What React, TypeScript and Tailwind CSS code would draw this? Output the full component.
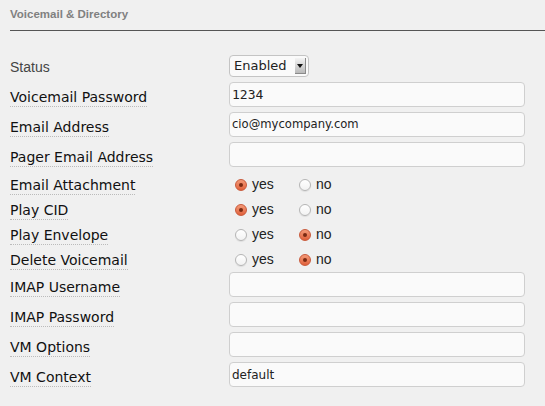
import React from 'react';

const labelFont = { fontFamily: '"DejaVu Sans", sans-serif' };

const Label: React.FC<{ text: string; shift?: boolean }> = ({ text, shift }) => (
    <div className={`w-[219px] shrink-0 ${shift ? 'translate-y-[1px]' : '-translate-y-[1px]'}`}>
        <span className="text-[14px] text-[#111] border-b border-dotted border-[#bbb] pb-[1px]" style={labelFont}>{text}</span>
    </div>
);

const TextRow: React.FC<{ label: string; value?: string; mono?: boolean; size?: string }> = ({ label, value = '', mono, size = 'text-[13px]' }) => (
    <div className="flex items-center h-[25px] mb-[5px]">
        <Label text={label} shift />
        <div
            className={`w-[296px] h-[25px] rounded-[4px] border border-[#cfcfcf] bg-[#fafafa] flex items-center px-[2px] text-[#222] ${size}`}
            style={{ fontFamily: mono ? '"DejaVu Sans Mono", monospace' : '"DejaVu Sans", sans-serif' }}
        >
            {value}
        </div>
    </div>
);

const Radio: React.FC<{ checked: boolean }> = ({ checked }) =>
    checked ? (
        <span className="w-[12px] h-[12px] rounded-full bg-gradient-to-b from-[#f39a78] to-[#e0603a] border border-[#c9593a] flex items-center justify-center">
            <span className="w-[4px] h-[4px] rounded-full bg-[#7a2a12]" />
        </span>
    ) : (
        <span className="w-[12px] h-[12px] rounded-full bg-gradient-to-b from-[#ffffff] to-[#f2f2f2] border border-[#b5b5b5] shadow-[0_1px_1px_rgba(0,0,0,0.08)]" />
    );

const RadioRow: React.FC<{ label: string; yes: boolean }> = ({ label, yes }) => (
    <div className="flex items-center h-[25px]">
        <Label text={label} />
        <div className="flex items-center text-[14px] text-[#222]" style={{ fontFamily: '"Liberation Sans", Arial, sans-serif' }}>
            <div className="flex items-center w-[70px] pl-[6px] gap-[5px]">
                <Radio checked={yes} />
                <span>yes</span>
            </div>
            <div className="flex items-center gap-[5px]">
                <Radio checked={!yes} />
                <span>no</span>
            </div>
        </div>
    </div>
);

export default function App() {
    return (
        <div className="w-[545px] h-[406px] bg-[#f0f0f0] pl-[10px] overflow-hidden">
            <div className="h-[31px] flex items-center border-b border-[#555]">
                <span className="text-[11.5px] font-bold text-[#808080] -mt-[1px]" style={{ fontFamily: '"Liberation Sans", Arial, sans-serif' }}>
                    Voicemail &amp; Directory
                </span>
            </div>

            <div className="pt-[24px]">
                <div className="flex items-center h-[22px] mb-[5px]">
                    <div className="w-[219px] shrink-0 text-[14px] text-[#444] translate-y-[1px]" style={{ fontFamily: '"Liberation Sans", Arial, sans-serif' }}>Status</div>
                    <div className="w-[80px] h-[22px] rounded-[4px] border border-[#c4c4c4] bg-[#fafafa] flex items-center justify-between pl-[4px] pr-[2px]">
                        <span className="text-[13px] text-[#222]" style={labelFont}>Enabled</span>
                        <span className="w-[11px] h-[16px] bg-gradient-to-b from-[#f4f4f4] to-[#b9b9b9] border-r border-b border-[#8a8a8a] flex items-center justify-center">
                            <svg width="6" height="4" viewBox="0 0 6 4"><path d="M0 0h6L3 4z" fill="#111" /></svg>
                        </span>
                    </div>
                </div>

                <TextRow label="Voicemail Password" value="1234" mono />
                <TextRow label="Email Address" value="cio@mycompany.com" size="text-[11.6px]" />
                <TextRow label="Pager Email Address" />

                <RadioRow label="Email Attachment" yes />
                <RadioRow label="Play CID" yes />
                <RadioRow label="Play Envelope" yes={false} />
                <RadioRow label="Delete Voicemail" yes={false} />

                <TextRow label="IMAP Username" />
                <TextRow label="IMAP Password" />
                <TextRow label="VM Options" />
                <TextRow label="VM Context" value="default" size="text-[12px]" />
            </div>
        </div>
    );
}
